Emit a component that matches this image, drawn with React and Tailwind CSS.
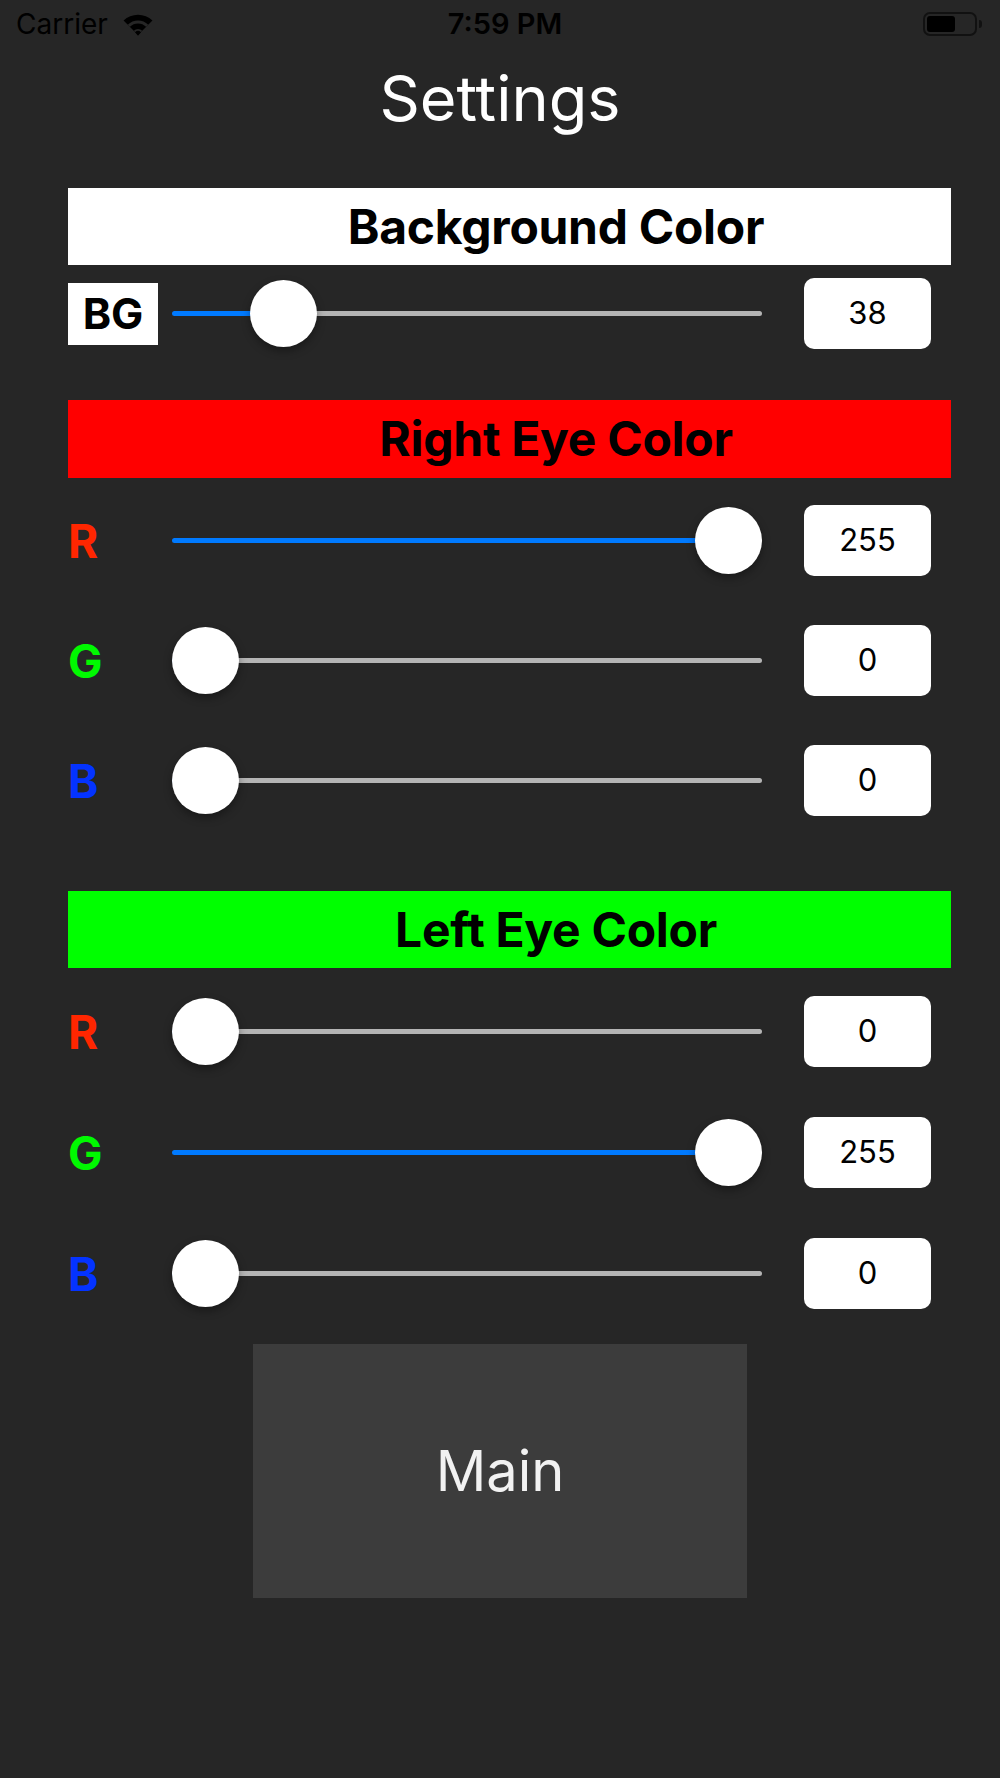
import React from 'react';

// iOS-style slider: track split into filled / empty, thumb sits on top
const Slider = ({ value }) => {
  const travel = 590 - 67;
  const left = (value / 255) * travel;
  return (
    <div className="relative flex h-[67px] w-[590px] items-center">
      <div className="flex h-[5px] w-full overflow-hidden rounded-full">
        <div className="bg-[#007aff]" style={{ width: left + 33 }} />
        <div className="flex-1 bg-[#b4b4b4]" />
      </div>
      <div
        className="absolute top-0 h-[67px] w-[67px] rounded-full bg-white shadow-[0_4px_8px_rgba(0,0,0,0.35)]"
        style={{ left }}
      />
    </div>
  );
};

const ValueBox = ({ value }) => (
  <div className="ml-[42px] flex h-[71px] w-[127px] items-center justify-center rounded-[10px] bg-white text-[31px] text-black">
    {value}
  </div>
);

const ColorRow = ({ label, color, value, className = '' }) => (
  <div className={`flex h-[71px] items-center ${className}`}>
    <div className={`w-[104px] text-[46px] font-bold leading-none ${color}`}>{label}</div>
    <Slider value={value} />
    <ValueBox value={value} />
  </div>
);

const SectionHeader = ({ title, bg, className = '' }) => (
  <div className={`flex h-[77px] items-center justify-center pl-[93px] ${bg} ${className}`}>
    <span className="text-[48px] font-bold leading-none tracking-[-0.3px] text-black">{title}</span>
  </div>
);

const Wifi = () => (
  <svg width="32" height="25" viewBox="0 0 31 24" className="ml-[14px]">
    <path d="M15.5 22 L1.5 8.2 A20 20 0 0 1 29.5 8.2 Z" fill="#000" />
    <path d="M15.5 22 L5.6 12.2 A14 14 0 0 1 25.4 12.2 Z" fill="#262626" />
    <path d="M15.5 22 L7.7 14.2 A11 11 0 0 1 23.3 14.2 Z" fill="#000" />
    <path d="M15.5 22 L11.5 18 A5.6 5.6 0 0 1 19.5 18 Z" fill="#262626" />
    <path d="M15.5 23 L12.6 19.4 A4.2 4.2 0 0 1 18.4 19.4 Z" fill="#000" />
  </svg>
);

export default function App() {
  return (
    <div className="min-h-[1778px] w-full bg-[#262626] font-['Inter',sans-serif]">
      {/* status bar */}
      <div className="grid h-[48px] grid-cols-3 items-center px-[16px] text-[28px] text-black">
        <div className="flex items-center">
          <span>Carrier</span>
          <Wifi />
        </div>
        <div className="pl-[10px] text-center text-[29px] font-semibold">7:59 PM</div>
        <div className="flex items-center justify-end pr-[2px]">
          <div className="flex h-[24px] w-[54px] items-center rounded-[7px] border-2 border-[#111] p-[2px]">
            <div className="h-full w-[28px] rounded-[3px] bg-black" />
          </div>
          <div className="ml-[2px] h-[8px] w-[3px] rounded-r-full bg-[#111]" />
        </div>
      </div>

      {/* title */}
      <div className="flex h-[100px] items-center justify-center">
        <h1 className="text-[63px] font-normal leading-none text-white">Settings</h1>
      </div>

      <div className="pl-[68px] pr-[49px] pt-[40px]">
        <SectionHeader title="Background Color" bg="bg-white" className="h-[75px]" />
        <div className="mt-[13px] flex h-[71px] items-center">
          <div className="w-[104px]">
            <div className="flex h-[62px] w-[90px] items-center justify-center bg-white text-[43px] font-bold leading-none text-black">
              BG
            </div>
          </div>
          <Slider value={38} />
          <ValueBox value={38} />
        </div>

        <SectionHeader title="Right Eye Color" bg="bg-[#ff0000]" className="mt-[51px] h-[78px]" />
        <ColorRow label="R" color="text-[#ff2600]" value={255} className="mt-[27px]" />
        <ColorRow label="G" color="text-[#00f900]" value={0} className="mt-[49px]" />
        <ColorRow label="B" color="text-[#0433ff]" value={0} className="mt-[49px]" />

        <SectionHeader title="Left Eye Color" bg="bg-[#00ff00]" className="mt-[75px]" />
        <ColorRow label="R" color="text-[#ff2600]" value={0} className="mt-[28px]" />
        <ColorRow label="G" color="text-[#00f900]" value={255} className="mt-[50px]" />
        <ColorRow label="B" color="text-[#0433ff]" value={0} className="mt-[50px]" />
      </div>

      <div className="mt-[35px] flex justify-center">
        <button className="flex h-[254px] w-[494px] items-center justify-center bg-[#3c3c3c] text-[56px] leading-none text-[#f2f2f2]">
          Main
        </button>
      </div>
    </div>
  );
}
